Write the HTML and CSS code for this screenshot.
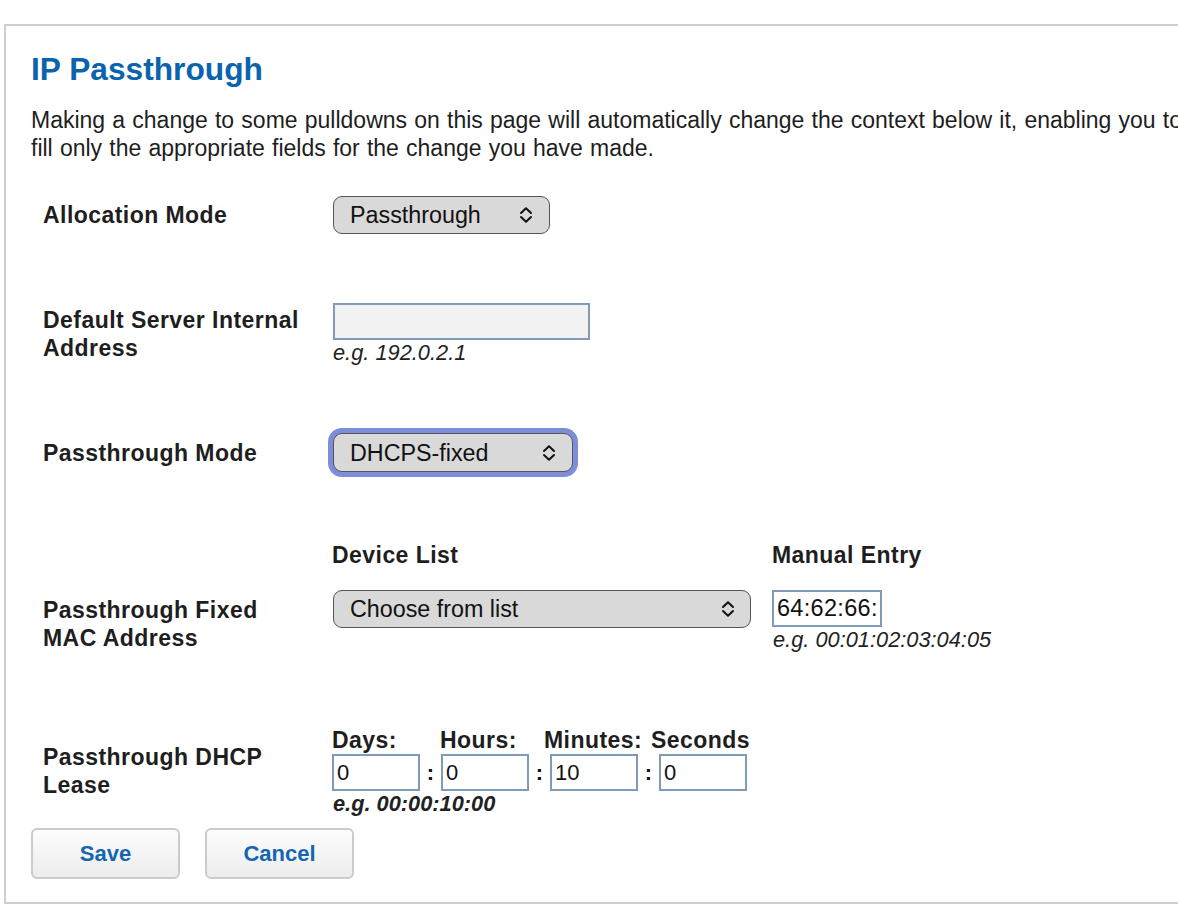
FILE: index.html
```html
<!DOCTYPE html>
<html lang="en">
<head>
<meta charset="utf-8">
<title>IP Passthrough</title>
<link rel="stylesheet" href="styles.css">
</head>
<body>
<div class="panel">
  <h1 class="title">IP Passthrough</h1>
  <p class="intro">Making a change to some pulldowns on this page will automatically change the context below it, enabling you to<br>fill only the appropriate fields for the change you have made.</p>

  <form class="form">
    <div class="row row-alloc">
      <label class="label">Allocation Mode</label>
      <div class="controls">
        <div class="select-wrap w-alloc">
          <select class="select"><option>Passthrough</option></select>
          <svg class="chev" viewBox="0 0 14 18" width="14" height="18"><path d="M2 7 L7 2.2 L12 7 M2 11 L7 15.8 L12 11" fill="none" stroke="#111" stroke-width="2" stroke-linecap="round" stroke-linejoin="round"/></svg>
        </div>
      </div>
    </div>

    <div class="row row-server">
      <label class="label">Default Server Internal<br>Address</label>
      <div class="controls">
        <input class="text text-server" type="text" value="">
        <div class="hint">e.g. 192.0.2.1</div>
      </div>
    </div>

    <div class="row row-mode">
      <label class="label">Passthrough Mode</label>
      <div class="controls">
        <div class="select-wrap w-mode focused">
          <select class="select"><option>DHCPS-fixed</option></select>
          <svg class="chev" viewBox="0 0 14 18" width="14" height="18"><path d="M2 7 L7 2.2 L12 7 M2 11 L7 15.8 L12 11" fill="none" stroke="#111" stroke-width="2" stroke-linecap="round" stroke-linejoin="round"/></svg>
        </div>
      </div>
    </div>

    <div class="row row-mac">
      <label class="label">Passthrough Fixed<br>MAC Address</label>
      <div class="controls mac">
        <div class="mac-col">
          <div class="head">Device List</div>
          <div class="select-wrap w-list">
            <select class="select"><option>Choose from list</option></select>
            <svg class="chev" viewBox="0 0 14 18" width="14" height="18"><path d="M2 7 L7 2.2 L12 7 M2 11 L7 15.8 L12 11" fill="none" stroke="#111" stroke-width="2" stroke-linecap="round" stroke-linejoin="round"/></svg>
          </div>
        </div>
        <div class="mac-col">
          <div class="head">Manual Entry</div>
          <input class="text text-mac" type="text" value="64:62:66:">
          <div class="hint">e.g. 00:01:02:03:04:05</div>
        </div>
      </div>
    </div>

    <div class="row row-lease">
      <label class="label">Passthrough DHCP<br>Lease</label>
      <div class="controls">
        <div class="lease-heads">
          <span class="head h-days">Days:</span>
          <span class="head h-hours">Hours:</span>
          <span class="head h-min">Minutes:</span>
          <span class="head h-sec">Seconds</span>
        </div>
        <div class="lease-inputs">
          <input class="text text-lease" type="text" value="0">
          <span class="colon">:</span>
          <input class="text text-lease" type="text" value="0">
          <span class="colon">:</span>
          <input class="text text-lease" type="text" value="10">
          <span class="colon">:</span>
          <input class="text text-lease" type="text" value="0">
        </div>
        <div class="hint hint-bold">e.g. 00:00:10:00</div>
      </div>
    </div>

    <div class="buttons">
      <button type="button" class="btn">Save</button>
      <button type="button" class="btn">Cancel</button>
    </div>
  </form>
</div>
</body>
</html>
```

FILE: styles.css
```css
html, body {
  margin: 0;
  padding: 0;
  background: #fff;
  overflow: hidden;
}

body {
  font-family: "Liberation Sans", Arial, sans-serif;
  color: #1e1e1e;
}

.panel {
  margin: 24px 0 0 4px;
  width: 1240px;
  border: 2px solid #cfcfcf;
  padding: 24px 25px 23px 25px;
  box-sizing: border-box;
}

.title {
  margin: 0;
  font-size: 31.7px;
  line-height: 38px;
  font-weight: bold;
  color: #0b63ad;
}

.intro {
  margin: 19px 0 0 0;
  font-size: 23px;
  line-height: 27.5px;
  white-space: nowrap;
  word-spacing: 0.8px;
}

.form {
  margin: 0;
}

.row {
  display: grid;
  grid-template-columns: 289px auto;
  align-items: center;
  padding-left: 12px;
}

.row-alloc { margin-top: 34px; }
.row-server { margin-top: 69px; }
.row-mode { margin-top: 68px; }
.row-mac { margin-top: 69px; align-items: end; }
.row-lease { margin-top: 74px; }

.label {
  font-size: 23px;
  line-height: 28px;
  font-weight: bold;
  letter-spacing: 0.45px;
  color: #1e1e1e;
  white-space: nowrap;
}

.controls {
  display: flex;
  flex-direction: column;
  align-items: flex-start;
}

.select-wrap {
  position: relative;
  height: 38px;
  box-sizing: border-box;
  border: 1.5px solid #555;
  border-radius: 9px;
  background: #d9d9d9;
  margin-left: 1px;
}

.select-wrap.focused {
  height: 39px;
  box-shadow: 0 0 0 5px #7e8dd8;
}

.w-alloc { width: 217px; }
.w-mode { width: 240px; }
.w-list { width: 418px; }

.select {
  -webkit-appearance: none;
  appearance: none;
  border: 0;
  outline: 0;
  background: transparent;
  width: 100%;
  height: 100%;
  padding: 0 0 0 16px;
  margin: 0;
  font-family: "Liberation Sans", Arial, sans-serif;
  font-size: 23.3px;
  color: #111;
}

.chev {
  position: absolute;
  right: 16px;
  top: 50%;
  margin-top: -9px;
  pointer-events: none;
}

.w-list .chev { right: 15px; }

.text {
  box-sizing: border-box;
  border: 2px solid #7f9bb7;
  border-radius: 0;
  font-family: "Liberation Sans", Arial, sans-serif;
  font-size: 22px;
  color: #111;
  padding: 0 3px;
  margin: 0;
  outline: 0;
  background: #fff;
}

.text-server {
  width: 257px;
  height: 37px;
  background: #f2f2f2;
  margin-left: 1px;
}

.hint {
  font-size: 21.8px;
  line-height: 24px;
  font-style: italic;
  color: #222;
  margin-left: 1px;
  margin-top: 1px;
}

.hint-bold {
  font-weight: bold;
}

.mac {
  flex-direction: row;
  align-items: flex-start;
  gap: 21px;
}

.mac-col {
  display: flex;
  flex-direction: column;
  align-items: flex-start;
}

.head {
  font-size: 23px;
  line-height: 28px;
  font-weight: bold;
  letter-spacing: 0.45px;
  color: #1e1e1e;
}

.mac-col .head {
  margin-bottom: 21px;
}

.text-mac {
  width: 110px;
  height: 37px;
  font-size: 23.5px;
  letter-spacing: 0.3px;
}

.lease-heads {
  display: flex;
  white-space: nowrap;
}

.h-days { width: 108px; }
.h-hours { width: 104px; }
.h-min { width: 107px; }
.h-sec { width: auto; }

.lease-inputs {
  display: flex;
  align-items: center;
}

.text-lease {
  width: 88px;
  height: 37px;
}

.colon {
  width: 21px;
  text-align: center;
  font-size: 22px;
  font-weight: bold;
  color: #111;
}

.buttons {
  display: flex;
  gap: 25px;
  margin-top: 12px;
}

.btn {
  width: 149px;
  height: 51px;
  box-sizing: border-box;
  border: 2px solid #cbcbcb;
  border-radius: 6px;
  background: linear-gradient(#fdfdfd, #ececec);
  font-family: "Liberation Sans", Arial, sans-serif;
  font-size: 22px;
  font-weight: bold;
  color: #1565b0;
  padding: 0;
  cursor: pointer;
}
```
